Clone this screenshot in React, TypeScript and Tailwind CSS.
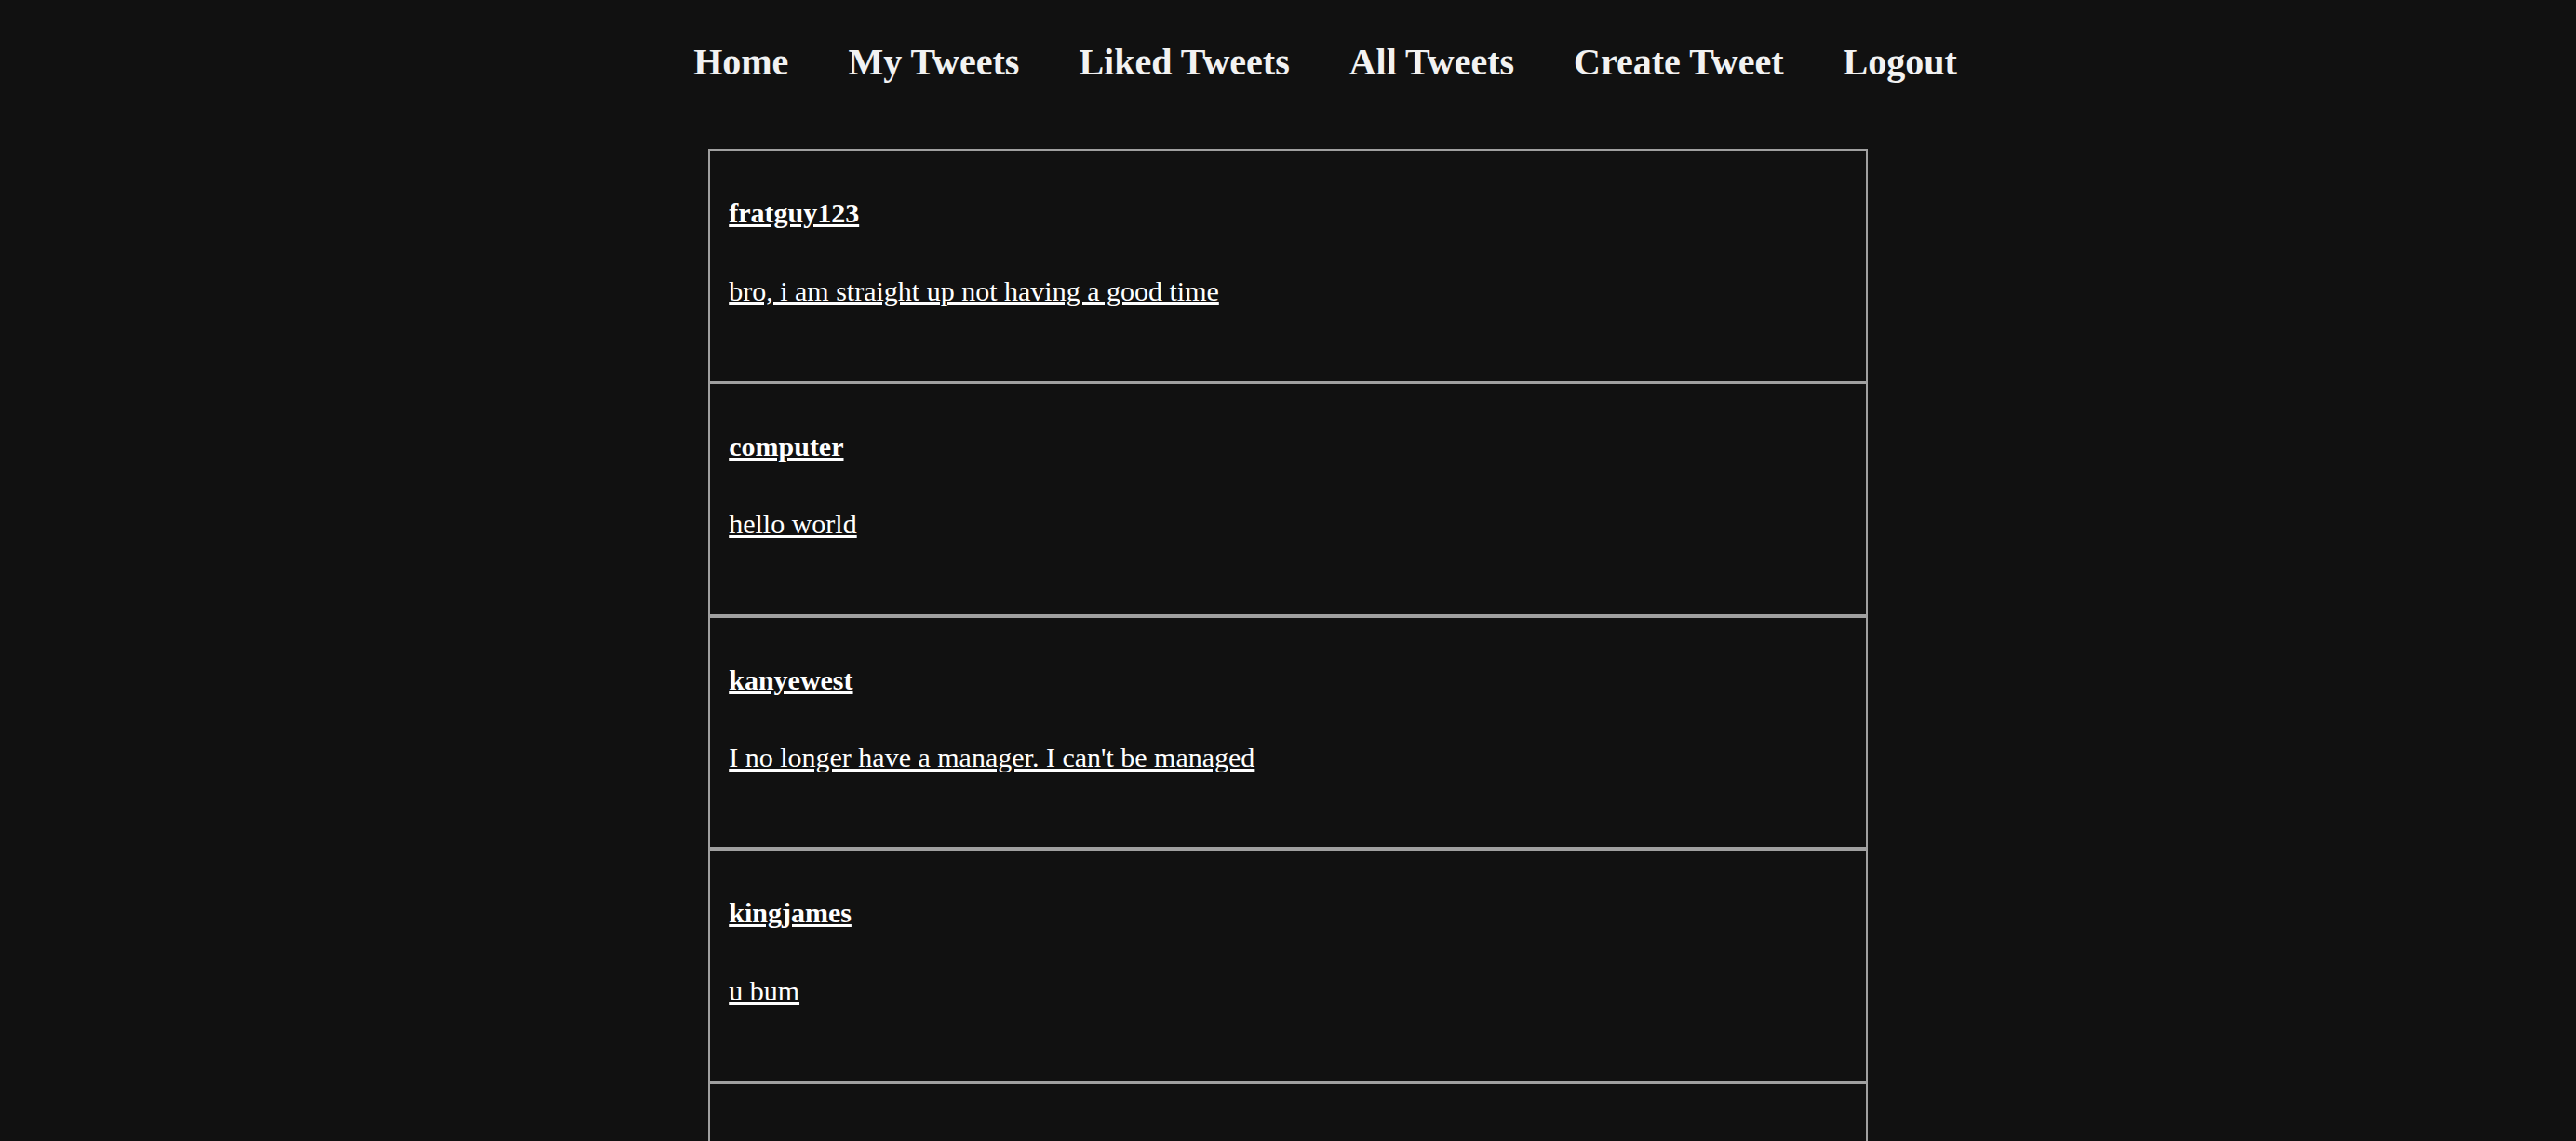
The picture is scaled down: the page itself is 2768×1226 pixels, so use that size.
const navLinks = ["Home", "My Tweets", "Liked Tweets", "All Tweets", "Create Tweet", "Logout"];

type Tweet = {
  id: number;
  username: string;
  content: string;
};

const tweets: Tweet[] = [
  { id: 1, username: "fratguy123", content: "bro, i am straight up not having a good time" },
  { id: 2, username: "computer", content: "hello world" },
  { id: 3, username: "kanyewest", content: "I no longer have a manager. I can't be managed" },
  { id: 4, username: "kingjames", content: "u bum" },
  { id: 5, username: "anonymous", content: "who took my hat" },
];

function TweetCard({ tweet }: { tweet: Tweet }) {
  return (
    <div className="border-2 border-[#a0a0a0] px-[20px] pt-[20px] pb-[20px]">
      <a href="#" className="mt-[30px] block text-[30px] leading-[34.5px] font-bold text-white underline">
        {tweet.username}
      </a>
      <a href="#" className="mt-[49px] mb-[58.75px] block text-[30px] leading-[34.5px] text-white underline">
        {tweet.content}
      </a>
    </div>
  );
}

export default function App() {
  return (
    <div
      className="min-h-screen bg-[#111111] text-white"
      style={{ fontFamily: '"Liberation Serif", "Times New Roman", serif' }}
    >
      <nav className="pt-[44px]">
        <ul className="flex justify-center gap-[64px] pl-[80px]">
          {navLinks.map((link) => (
            <li key={link}>
              <a href="#" className="text-[40px] leading-[46px] font-bold text-[#f2f2f2]">
                {link}
              </a>
            </li>
          ))}
        </ul>
      </nav>
      <div className="mx-auto mt-[70px] w-[45%]">
        {tweets.map((tweet) => (
          <TweetCard key={tweet.id} tweet={tweet} />
        ))}
      </div>
    </div>
  );
}
